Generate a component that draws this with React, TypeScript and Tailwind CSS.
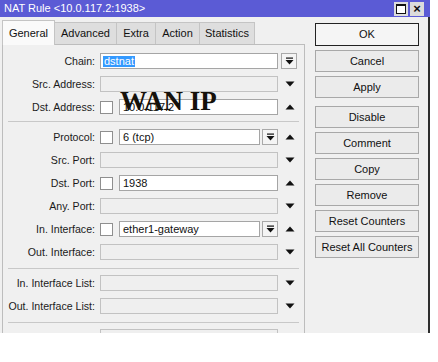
import React from "react"

const font = { fontFamily: '"Liberation Sans", Arial, sans-serif' }

function DropBtn() {
  return (
    <div className="w-[16px] h-[16px] border border-[#a9a9a9] bg-[#f4f4f4] flex items-center justify-center shrink-0">
      <svg width="9" height="9" viewBox="0 0 9 9">
        <rect x="1" y="0.5" width="7" height="1.2" fill="#111" />
        <path d="M0.5 3 L8.5 3 L4.5 7.5 Z" fill="#111" />
      </svg>
    </div>
  )
}

function Arrow({ up }: { up?: boolean }) {
  return (
    <div className="w-[20px] h-[16px] flex items-center justify-center shrink-0">
      <svg width="10" height="6" viewBox="0 0 10 6">
        {up ? <path d="M0.5 5.5 L9.5 5.5 L5 0.5 Z" fill="#111" /> : <path d="M0.5 0.5 L9.5 0.5 L5 5.5 Z" fill="#111" />}
      </svg>
    </div>
  )
}

function Check() {
  return <div className="w-[13px] h-[13px] border border-[#8f8f8f] bg-white shrink-0 mr-[6px]" />
}

type RowProps = {
  label: string
  check?: boolean
  value?: React.ReactNode
  drop?: boolean
  arrow?: "up" | "down"
  chainDrop?: boolean
}

function Row({ label, check, value, drop, arrow, chainDrop }: RowProps) {
  const enabled = value !== undefined
  return (
    <div className="flex items-center h-[16px] shrink-0">
      <div className="w-[93px] pr-[1px] text-right text-[10.6px] text-[#1a1a1a] leading-none whitespace-nowrap">{label}</div>
      <div className="w-[178px] ml-[4px] flex items-center h-[16px]">
        {check && <Check />}
        <div
          className={
            "flex-1 h-[16px] border flex items-center pl-[3px] text-[11px] leading-none text-[#111] " +
            (enabled ? "bg-white border-[#a5a5a5]" : "bg-[#efefef] border-[#c2c2c2]")
          }
        >
          {value}
        </div>
        {drop && <div className="ml-[2px]"><DropBtn /></div>}
      </div>
      {chainDrop ? <div className="ml-[3px]"><DropBtn /></div> : arrow ? <div className="ml-[2px]"><Arrow up={arrow === "up"} /></div> : null}
    </div>
  )
}

function Sep() {
  return <div className="h-[1px] bg-[#c8c8c8] mx-[5px]" />
}

function Btn({ children, main }: { children: React.ReactNode; main?: boolean }) {
  return (
    <div
      className={
        "w-[104px] flex items-center justify-center text-[11px] text-[#111] " +
        (main ? "h-[23px] border border-[#222] bg-[#f5f5f5]" : "h-[22px] border border-[#a8a8a8] bg-[#ebebeb]")
      }
    >
      {children}
    </div>
  )
}

export default function App() {
  const tabs = [
    { t: "Advanced", w: "w-[62px]" },
    { t: "Extra", w: "w-[39px]" },
    { t: "Action", w: "w-[44px]" },
    { t: "Statistics", w: "w-[55px]" },
  ]

  return (
    <div className="relative w-[438px] h-[362px] bg-white overflow-hidden" style={font}>
      <div className="w-[430px] flex flex-col">
        {/* Title bar */}
        <div className="h-[17px] bg-[#5b5bd5] flex items-center justify-between pl-[4px] pr-[6px]">
          <span className="text-white text-[11px] leading-none">NAT Rule &lt;10.0.117.2:1938&gt;</span>
          <div className="flex gap-[2px]">
            <div className="w-[14px] h-[14px] bg-[#dcdcdc] flex items-center justify-center">
              <div className="w-[10px] h-[10px] border border-[#111] border-t-2 bg-white" />
            </div>
            <div className="w-[14px] h-[14px] bg-[#dcdcdc] flex items-center justify-center text-[13px] font-bold leading-none text-[#111]">
              ×
            </div>
          </div>
        </div>

        {/* Body */}
        <div className="h-[316px] overflow-hidden bg-[#f0f0f0] border-r-2 border-[#2e2e2e] flex pt-[2px] pl-[2px]">
          {/* Left: tabs + panel */}
          <div className="w-[303px] flex flex-col">
            <div className="flex items-end h-[25px] shrink-0">
              <div className="w-[53px] h-[25px] bg-[#fafafa] border border-b-0 border-[#c4c4c4] flex items-center justify-center text-[11px] text-[#111] relative z-10 -mb-[1px]">
                General
              </div>
              {tabs.map((tb) => (
                <div
                  key={tb.t}
                  className={tb.w + " h-[22px] bg-[#dedede] border border-l-0 border-b-0 border-[#c4c4c4] flex items-center justify-center text-[11px] text-[#111]"}
                >
                  {tb.t}
                </div>
              ))}
            </div>
            <div className="flex-1 min-h-0 overflow-hidden border border-b-0 border-[#bdbdbd] bg-[#f0f0f0] pt-[8px] flex flex-col">
              <div className="flex flex-col gap-[7px]">
                <Row
                  label="Chain:"
                  value={<span className="bg-[#3399ff] text-white px-[1px] -ml-[1px]">dstnat</span>}
                  chainDrop
                />
                <Row label="Src. Address:" arrow="down" />
                <Row label="Dst. Address:" check value="10.0.117.2" arrow="up" />
              </div>
              <div className="mt-[6px] mb-[7px]"><Sep /></div>
              <div className="flex flex-col gap-[7px]">
                <Row label="Protocol:" check value="6 (tcp)" drop arrow="up" />
                <Row label="Src. Port:" arrow="down" />
                <Row label="Dst. Port:" check value="1938" arrow="up" />
                <Row label="Any. Port:" arrow="down" />
                <Row label="In. Interface:" check value="ether1-gateway" drop arrow="up" />
                <Row label="Out. Interface:" arrow="down" />
              </div>
              <div className="mt-[8px] mb-[6px]"><Sep /></div>
              <div className="flex flex-col gap-[7px]">
                <Row label="In. Interface List:" arrow="down" />
                <Row label="Out. Interface List:" arrow="down" />
              </div>
              <div className="mt-[8px] mb-[6px]"><Sep /></div>
              <Row label="" arrow="down" />
            </div>
          </div>

          {/* Right: buttons */}
          <div className="ml-[10px] pt-[4px] flex flex-col">
            <Btn main>OK</Btn>
            <div className="mt-[4px] flex flex-col gap-[4px]">
              <Btn>Cancel</Btn>
              <Btn>Apply</Btn>
            </div>
            <div className="mt-[8px] flex flex-col gap-[4px]">
              <Btn>Disable</Btn>
              <Btn>Comment</Btn>
              <Btn>Copy</Btn>
              <Btn>Remove</Btn>
              <Btn>Reset Counters</Btn>
              <Btn>Reset All Counters</Btn>
            </div>
          </div>
        </div>
      </div>

      {/* Annotation over the screenshot */}
      <div
        className="absolute left-[120px] top-[88px] text-[27px] font-bold leading-none text-[#15110a]"
        style={{ fontFamily: '"Liberation Serif", "Times New Roman", serif' }}
      >
        WAN IP
      </div>
    </div>
  )
}
